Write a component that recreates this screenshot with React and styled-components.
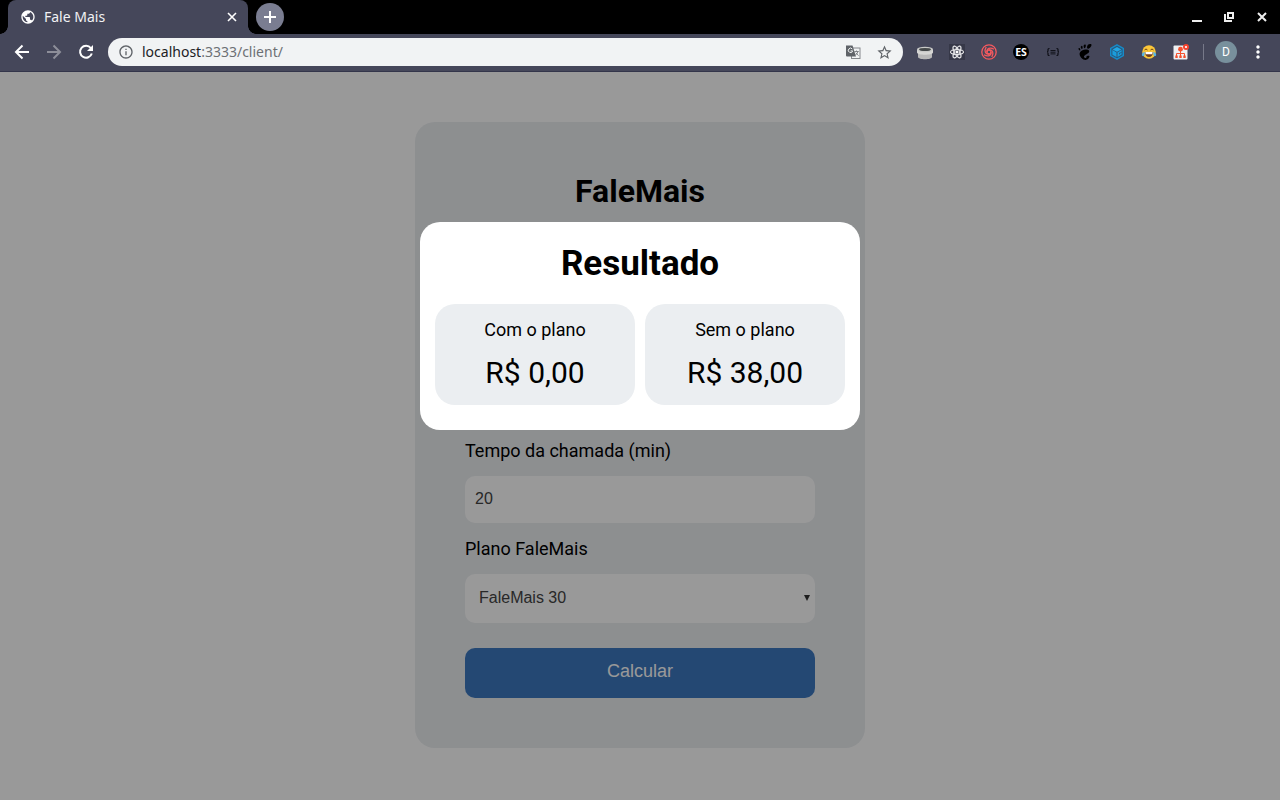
import React from "react";
import styled, { createGlobalStyle } from "styled-components";
import { MdInfoOutline, MdStarBorder, MdPublic, MdAdd, MdMoreVert } from "react-icons/md";
import { SiReact, SiGnome } from "react-icons/si";

const GlobalStyle = createGlobalStyle`
  * { box-sizing: border-box; }
  body { margin: 0; font-family: Roboto, sans-serif; color: #000; }
  #root { height: 100vh; }
  svg { display: block; flex: none; }
`;

const Window = styled.div`
  width: 1280px;
  height: 800px;
  display: flex;
  flex-direction: column;
  overflow: hidden;
`;

const TitleBar = styled.header`
  height: 34px;
  background: #000;
  display: flex;
  align-items: center;
  padding: 0 13px 0 8px;
`;

const Tab = styled.div`
  width: 240px;
  height: 34px;
  display: flex;
  align-items: center;
  gap: 8px;
  padding: 0 11px 0 12px;
  border-radius: 8px 8px 0 0;
  background: #45475a;
  color: #fff;
  position: relative;
  &::before, &::after {
    content: "";
    position: absolute;
    bottom: 0;
    width: 8px;
    height: 8px;
  }
  &::before { left: -8px; background: radial-gradient(circle at 0 0, transparent 7.5px, #45475a 8px); }
  &::after { right: -8px; background: radial-gradient(circle at 100% 0, transparent 7.5px, #45475a 8px); }
`;

const TabTitle = styled.span`
  flex: 1;
  font: 14px "Noto Sans", sans-serif;
  color: #f1f1f4;
  padding-bottom: 1px;
`;

const NewTab = styled.div`
  width: 28px;
  height: 28px;
  margin-left: 8px;
  border-radius: 50%;
  background: #7a7d91;
  color: #fff;
  display: grid;
  place-items: center;
`;

const WindowControls = styled.div`
  margin-left: auto;
  display: flex;
  gap: 22px;
  color: #eee;
  svg:last-child { margin-left: 1px; }
`;

const Toolbar = styled.nav`
  height: 38px;
  flex: none;
  display: flex;
  align-items: center;
  padding: 0 12px 1px;
  background: #45475a;
  border-bottom: 1px solid #33354a;
  color: #fff;
`;

const NavButtons = styled.div`
  display: flex;
  gap: 12px;
  margin-right: 12px;
`;

const NavButton = styled.span`
  color: ${(p) => (p.$disabled ? "#8d8e99" : "#fff")};
`;

const AddressBar = styled.div`
  width: 795px;
  height: 28px;
  border-radius: 14px;
  background: #f1f3f4;
  color: #5f6368;
  display: flex;
  align-items: center;
  padding: 0 10px;
`;

const Url = styled.span`
  flex: 1;
  margin-left: 8px;
  padding-bottom: 1px;
  font: 14px "Noto Sans", sans-serif;
  color: #6d7074;
  b { font-weight: 400; color: #202124; }
`;

const AddressActions = styled.div`
  display: flex;
  align-items: center;
  gap: 15px;
`;

const Extensions = styled.div`
  display: flex;
  align-items: center;
  gap: 16px;
  margin-left: 14px;
`;

const ReactTile = styled.span`
  width: 16px;
  height: 16px;
  background: #363848;
  display: grid;
  place-items: center;
  svg { stroke: #fff; stroke-width: 0.7px; }
`;

const Divider = styled.span`
  width: 1px;
  height: 16px;
  margin-left: 14px;
  background: #777989;
`;

const Avatar = styled.span`
  width: 22px;
  height: 22px;
  margin: 0 11px;
  border-radius: 50%;
  background: #78909c;
  display: grid;
  place-items: center;
  font-size: 12px;
`;

const Page = styled.main`
  position: relative;
  flex: 1;
  background: #fff;
  display: flex;
  justify-content: center;
  align-items: flex-start;
  padding-top: 50px;
`;

const Card = styled.div`
  width: 450px;
  height: 626px;
  padding: 50px;
  border-radius: 20px;
  background: #ebeef1;
  display: flex;
  flex-direction: column;
`;

const Title = styled.h1`
  margin: 0 0 230px;
  font-size: 32px;
  line-height: 38px;
  text-align: center;
`;

const Label = styled.label`
  font-size: 18px;
  line-height: 21px;
  margin-bottom: 15px;
`;

const Control = styled.div`
  height: ${(p) => p.$height}px;
  flex: none;
  margin-bottom: ${(p) => p.$gap}px;
  padding: ${(p) => (p.$select ? "0 5px 2px 14px" : "0 10px 2px")};
  border-radius: 10px;
  background: #fff;
  color: #444;
  display: flex;
  align-items: center;
  justify-content: space-between;
  font: 16px "Liberation Sans", sans-serif;
  line-height: 18px;
`;

const Submit = styled.button`
  height: 50px;
  padding: 0 0 4px;
  border: 0;
  border-radius: 10px;
  background: #3c78c0;
  color: #fff;
  font: 18px "Liberation Sans", sans-serif;
`;

const Overlay = styled.div`
  position: absolute;
  inset: 0;
  background: rgba(0, 0, 0, 0.4);
  display: flex;
  justify-content: center;
  align-items: flex-start;
  padding-top: 150px;
`;

const Modal = styled.section`
  width: 440px;
  height: 208px;
  padding: 21px 15px 25px;
  border-radius: 20px;
  background: #fff;
`;

const ModalTitle = styled.h2`
  margin: 0 0 20px;
  font-size: 35px;
  line-height: 41px;
  text-align: center;
`;

const Results = styled.div`
  display: grid;
  grid-template-columns: 1fr 1fr;
  gap: 10px;
`;

const Result = styled.div`
  height: 101px;
  padding-top: 15px;
  border-radius: 20px;
  background: #ebeef1;
  text-align: center;
`;

const ResultLabel = styled.p`
  margin: 0 0 15px;
  font-size: 18px;
  line-height: 21px;
`;

const ResultValue = styled.p`
  margin: 0;
  font-size: 30px;
  line-height: 35px;
`;

const Icon = ({ children }) => (
  <svg width="16" height="16" viewBox="0 0 16 16" fill="none">{children}</svg>
);

const NavIcon = ({ children }) => (
  <svg width="20" height="20" viewBox="0 0 20 20" fill="none" stroke="currentColor" strokeWidth="2">{children}</svg>
);

const TinIcon = () => (
  <Icon>
    <path d="M1 8v5c0 3 14 3 14 0V8z" fill="#b8b8b8" />
    <path d="M0 5.5v3c0 3 16 3 16 0v-3z" fill="#d6d6d4" />
    <ellipse cx="8" cy="5.5" rx="8" ry="2.7" fill="#c9cac8" />
    <ellipse cx="8" cy="5.5" rx="6" ry="1.6" fill="#45494a" />
  </Icon>
);

const KnotIcon = () => (
  <Icon>
    <g stroke="#f75a5f" strokeWidth="1.3">
      <circle cx="8" cy="8" r="7.2" />
      <circle cx="8" cy="8" r="2" />
      {[0, 90, 180, 270].map((a) => (
        <path key={a} transform={`rotate(${a} 8 8)`} d="M6 8C5.600 4.500 9 2.800 13 5.200" />
      ))}
    </g>
  </Icon>
);

const EsIcon = () => (
  <Icon>
    <circle cx="8" cy="8" r="8" fill="#000" />
    <text x="8" y="11.6" textAnchor="middle" fontFamily="Open Sans, sans-serif" fontWeight="700" fontSize="10.5" fill="#fff">ES</text>
  </Icon>
);

const BracesIcon = () => (
  <Icon>
    <path d="M4.500 4.500H4q-1 0-1 1v1.300Q3 8 2 8q1 0 1 1.200v1.300q0 1 1 1h.5M11.500 4.500h.5q1 0 1 1v1.300Q13 8 14 8q-1 0-1 1.200v1.300q0 1-1 1h-.5" stroke="#0c0d14" strokeWidth="1.2" />
    <path d="M5.500 6.500h5M5.500 8.200h5M5.500 9.900h5" stroke="#0c0d14" strokeWidth=".9" />
  </Icon>
);

const CubeIcon = () => (
  <Icon>
    <path d="M8 .9 14.300 4.400v7.200L8 15.100 1.700 11.600V4.400z" fill="#28597d" stroke="#168bc9" strokeWidth="1.4" />
    <path d="M8 3 12.400 5.400 8 7.700 3.600 5.400z" fill="#22a7e5" />
    <path d="M3.400 6.100 7.500 8.400v4.700l-4.100-2.400zM8.500 8.400l4.100-2.300v1.600l-2.500 1.400v1.500l1.200-.7v-.8l1.300-.7v2.200l-4.100 2.500z" fill="#1a9ddc" />
  </Icon>
);

const JoyIcon = () => (
  <Icon>
    <circle cx="8" cy="8" r="6.800" fill="#fbc638" />
    <path d="M3.500 6q1.500-2 3 0M9.500 6q1.500-2 3 0" stroke="#6b4518" strokeWidth="1" />
    <path d="M3.800 8h8.400q-.5 5-4.200 5T3.800 8z" fill="#704021" />
    <path d="M4.300 8h7.400l-.4 2.200H4.700z" fill="#fff" />
    <path d="M3.600 7.800Q.8 9 .8 10.800c0 2 2.800 1.700 2.800-.3zM12.400 7.800q2.800 1.200 2.800 3c0 2-2.800 1.700-2.800-.3z" fill="#55b5e6" />
  </Icon>
);

const SitemapIcon = () => (
  <Icon>
    <rect x="0.500" y="1.500" width="14" height="14" rx="1" fill="#eef0f2" />
    <circle cx="7.500" cy="5.200" r="2.400" fill="#f4512e" />
    <path d="M7.500 5v8M3.500 12V9.500h8V12" stroke="#f4512e" strokeWidth="1" />
    <path d="M2.300 11.500h2.400v2.400H2.300zM6.300 11.500h2.400v2.400H6.300zM10.300 11.500h2.400v2.400h-2.400z" fill="#f4512e" />
    <circle cx="13" cy="3" r="3" fill="#f5432e" />
    <circle cx="13" cy="3" r="1.100" fill="#fff" />
  </Icon>
);

const TranslateIcon = () => (
  <Icon>
    <rect x="6.500" y="4" width="8.500" height="10.500" fill="#f1f3f4" stroke="#85888c" />
    <path d="M1 1.500h6.500L11 12.500H2q-1 0-1-1z" fill="#5f6368" />
    <path d="M7.300 5A2.200 2.200 0 1 0 7.700 6.900H5.600" stroke="#f1f3f4" />
    <path d="M9.300 7.500h4.400M11.500 6.500v1M13 7.500q-.5 2-2.500 3.500M10.800 8.700l2.700 3" stroke="#777b7f" strokeWidth=".9" />
  </Icon>
);

export default function App() {
  return (
    <Window>
      <GlobalStyle />
      <TitleBar>
        <Tab>
          <MdPublic size={16} />
          <TabTitle>Fale Mais</TabTitle>
          <svg width="10" height="10" viewBox="0 0 10 10" stroke="currentColor" strokeWidth="1.6"><path d="m1 1 8 8M9 1 1 9" /></svg>
        </Tab>
        <NewTab>
          <svg width="12" height="12" viewBox="0 0 12 12" stroke="currentColor" strokeWidth="2"><path d="M6 0v12M0 6h12" /></svg>
        </NewTab>
        <WindowControls>
          <svg width="10" height="10" viewBox="0 0 10 10"><path d="M0 8h10v2H0z" fill="currentColor" /></svg>
          <svg width="10" height="10" viewBox="0 0 10 10" fill="none" stroke="currentColor" strokeWidth="2"><path d="M4 1h5v5H4zM1 2v7h7" /></svg>
          <svg width="10" height="10" viewBox="0 0 10 10" stroke="currentColor" strokeWidth="2"><path d="m1 1 8 8M9 1 1 9" /></svg>
        </WindowControls>
      </TitleBar>
      <Toolbar>
        <NavButtons>
          <NavButton><NavIcon><path d="M17 10H4.500M10.500 3.500 4 10l6.500 6.500" /></NavIcon></NavButton>
          <NavButton $disabled><NavIcon><path d="M3 10h12.500M9.500 3.500 16 10l-6.500 6.500" /></NavIcon></NavButton>
          <NavButton><NavIcon><path d="M14.800 6A6 6 0 1 0 15.800 11.500" /><path d="M17 3v6h-6z" fill="currentColor" stroke="none" /></NavIcon></NavButton>
        </NavButtons>
        <AddressBar>
          <MdInfoOutline size={16} />
          <Url><b>localhost</b>:3333/client/</Url>
          <AddressActions>
            <TranslateIcon />
            <MdStarBorder size={17} />
          </AddressActions>
        </AddressBar>
        <Extensions>
          <TinIcon />
          <ReactTile><SiReact size={14} /></ReactTile>
          <KnotIcon />
          <EsIcon />
          <BracesIcon />
          <SiGnome size={16} color="#000" />
          <CubeIcon />
          <JoyIcon />
          <SitemapIcon />
        </Extensions>
        <Divider />
        <Avatar>D</Avatar>
        <MdMoreVert size={20} />
      </Toolbar>
      <Page>
        <Card>
          <Title>FaleMais</Title>
          <Label>Tempo da chamada (min)</Label>
          <Control $height={47} $gap={15}>20</Control>
          <Label>Plano FaleMais</Label>
          <Control $height={49} $gap={25} $select>
            FaleMais 30
            <svg width="6" height="6" viewBox="0 0 6 6"><path d="M0 0h6L3 6z" fill="#333" /></svg>
          </Control>
          <Submit>Calcular</Submit>
        </Card>
        <Overlay>
          <Modal>
            <ModalTitle>Resultado</ModalTitle>
            <Results>
              <Result>
                <ResultLabel>Com o plano</ResultLabel>
                <ResultValue>R$ 0,00</ResultValue>
              </Result>
              <Result>
                <ResultLabel>Sem o plano</ResultLabel>
                <ResultValue>R$ 38,00</ResultValue>
              </Result>
            </Results>
          </Modal>
        </Overlay>
      </Page>
    </Window>
  );
}
